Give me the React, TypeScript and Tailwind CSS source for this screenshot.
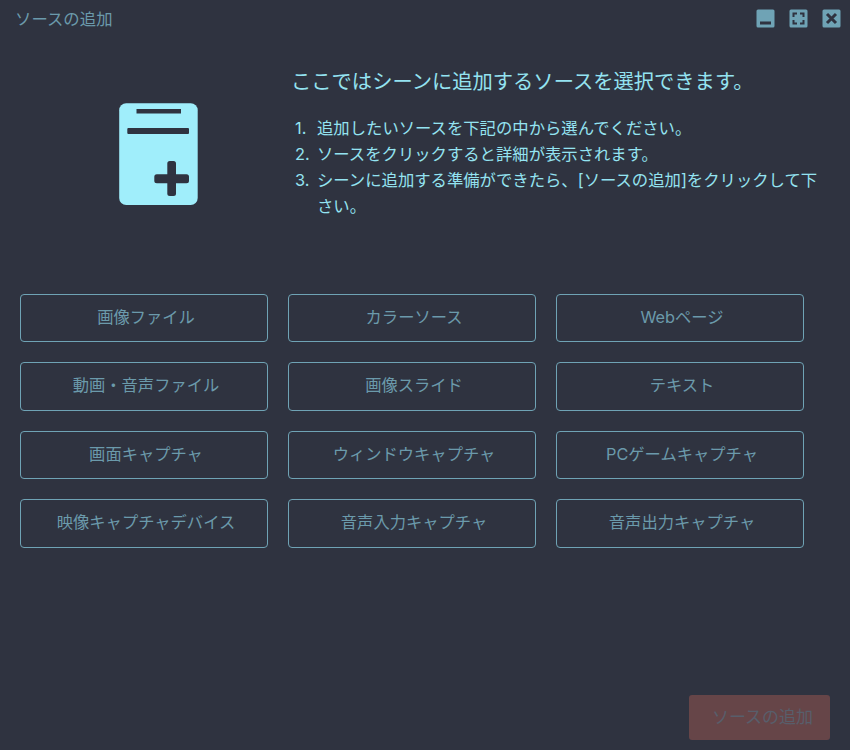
const sources = [
  "画像ファイル",
  "カラーソース",
  "Webページ",
  "動画・音声ファイル",
  "画像スライド",
  "テキスト",
  "画面キャプチャ",
  "ウィンドウキャプチャ",
  "PCゲームキャプチャ",
  "映像キャプチャデバイス",
  "音声入力キャプチャ",
  "音声出力キャプチャ",
];

const steps = [
  "追加したいソースを下記の中から選んでください。",
  "ソースをクリックすると詳細が表示されます。",
  "シーンに追加する準備ができたら、[ソースの追加]をクリックして下さい。",
];

const WindowIcons = () => (
  <div className="flex gap-[14px]">
    <svg width="19" height="19" viewBox="0 0 19 19">
      <rect x="0.500" y="0.500" width="18" height="18" rx="1.500" fill="#6fa3b5" />
      <rect x="4" y="12.500" width="11" height="3" fill="#2f3340" />
    </svg>
    <svg width="19" height="19" viewBox="0 0 19 19">
      <rect x="0.500" y="0.500" width="18" height="18" rx="1.500" fill="#6fa3b5" />
      <path d="M4.500 8V4.500H8M11 4.500h3.500V8M14.500 11v3.500H11M8 14.500H4.500V11" fill="none" stroke="#2f3340" strokeWidth="2" />
    </svg>
    <svg width="19" height="19" viewBox="0 0 19 19">
      <rect x="0.500" y="0.500" width="18" height="18" rx="1.500" fill="#6fa3b5" />
      <path d="M5 5l9 9M14 5l-9 9" fill="none" stroke="#2f3340" strokeWidth="3" />
    </svg>
  </div>
);

const SourceIcon = () => (
  <svg width="80" height="103" viewBox="0 0 80 103" className="shrink-0">
    <rect x="0.200" y="0.300" width="78.500" height="101.700" rx="7" fill="#a0eefb" />
    <rect x="17.500" y="6" width="44.500" height="4.500" fill="#2f3340" />
    <rect x="8.300" y="25" width="61.700" height="6" rx="1" fill="#2f3340" />
    <rect x="48.300" y="58" width="8.700" height="35" rx="2.500" fill="#2f3340" />
    <rect x="35.300" y="71.300" width="34.700" height="9" rx="2.500" fill="#2f3340" />
  </svg>
);

export default function App() {
  return (
    <div className="flex h-[750px] w-[850px] flex-col overflow-hidden bg-[#2f3340] font-['Inter','Noto_Sans_CJK_JP',sans-serif]">
      <div className="flex h-[37px] items-center justify-between pl-[15px] pr-[9px]">
        <span className="pt-[2px] text-[16.400px] text-[#6b9aab]">ソースの追加</span>
        <WindowIcons />
      </div>

      <div className="flex h-[257px] pr-[24px]">
        <div className="ml-[119px] mt-[66px] w-[172px] shrink-0">
          <SourceIcon />
        </div>
        <div className="mt-[30px] min-w-0 flex-1 text-[#94e3f1]">
          <h1 className="text-[20.300px] leading-[30px]">ここではシーンに追加するソースを選択できます。</h1>
          <ol className="mt-[18px] text-[16.350px] leading-[26px]">
            {steps.map((step, i) => (
              <li key={step} className="flex">
                <span className="w-[26px] shrink-0 pl-[4px]">{i + 1}.</span>
                <span>{step}</span>
              </li>
            ))}
          </ol>
        </div>
      </div>

      <div className="grid grid-cols-[248px_248px_248px] gap-x-[20px] gap-y-[20px] pl-[20px]">
        {sources.map((source) => (
          <button
            key={source}
            className="flex h-[48.400px] items-center justify-center rounded-[4px] border border-[#6fa3b5] pb-[2px] pl-[4px] text-[16.300px] text-[#6b9aab]"
          >
            {source}
          </button>
        ))}
      </div>

      <div className="mt-auto flex justify-end pb-[10px] pr-[20px]">
        <button className="h-[45px] w-[141px] rounded-[3px] bg-[#664548] pl-[6px] text-[17px] text-[#585e6b]">
          ソースの追加
        </button>
      </div>
    </div>
  );
}
